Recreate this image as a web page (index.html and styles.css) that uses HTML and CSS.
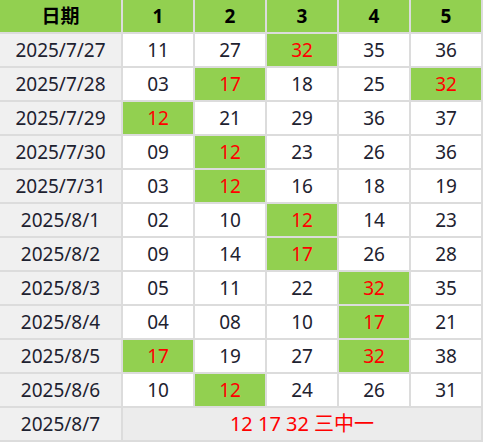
FILE: index.html
```html
<!DOCTYPE html>
<html lang="zh">
<head>
<meta charset="utf-8">
<link rel="stylesheet" href="styles.css">
</head>
<body>
<div class="grid">
  <div class="hd">日期</div><div class="hd">1</div><div class="hd">2</div><div class="hd">3</div><div class="hd">4</div><div class="hd">5</div>

  <div class="date">2025/7/27</div><div class="c">11</div><div class="c">27</div><div class="c hit">32</div><div class="c">35</div><div class="c">36</div>
  <div class="date">2025/7/28</div><div class="c">03</div><div class="c hit">17</div><div class="c">18</div><div class="c">25</div><div class="c hit">32</div>
  <div class="date">2025/7/29</div><div class="c hit">12</div><div class="c">21</div><div class="c">29</div><div class="c">36</div><div class="c">37</div>
  <div class="date">2025/7/30</div><div class="c">09</div><div class="c hit">12</div><div class="c">23</div><div class="c">26</div><div class="c">36</div>
  <div class="date">2025/7/31</div><div class="c">03</div><div class="c hit">12</div><div class="c">16</div><div class="c">18</div><div class="c">19</div>
  <div class="date">2025/8/1</div><div class="c">02</div><div class="c">10</div><div class="c hit">12</div><div class="c">14</div><div class="c">23</div>
  <div class="date">2025/8/2</div><div class="c">09</div><div class="c">14</div><div class="c hit">17</div><div class="c">26</div><div class="c">28</div>
  <div class="date">2025/8/3</div><div class="c">05</div><div class="c">11</div><div class="c">22</div><div class="c hit">32</div><div class="c">35</div>
  <div class="date">2025/8/4</div><div class="c">04</div><div class="c">08</div><div class="c">10</div><div class="c hit">17</div><div class="c">21</div>
  <div class="date">2025/8/5</div><div class="c hit">17</div><div class="c">19</div><div class="c">27</div><div class="c hit">32</div><div class="c">38</div>
  <div class="date">2025/8/6</div><div class="c">10</div><div class="c hit">12</div><div class="c">24</div><div class="c">26</div><div class="c">31</div>

  <div class="date">2025/8/7</div><div class="result">12 17 32 三中一</div>
</div>
</body>
</html>
```

FILE: styles.css
```css
html, body {
  margin: 0;
  padding: 0;
  background: #ffffff;
}

.grid {
  width: 483px;
  height: 442px;
  box-sizing: border-box;
  display: grid;
  grid-template-columns: 121px repeat(5, 70px);
  grid-auto-rows: 32px;
  gap: 2px;
  padding: 0 2px 2px 0;
  background: #dcdcdc;
  font-family: "Noto Sans", "Noto Sans CJK SC", sans-serif;
  font-size: 19px;
  color: #1e2230;
}

.grid > div {
  display: flex;
  align-items: center;
  justify-content: center;
  line-height: 1;
}

.hd {
  background: #92d050;
  color: #000;
  font-weight: bold;
}

.date {
  background: #f0f0f0;
}

.c {
  background: #ffffff;
}

.c.hit {
  background: #92d050;
  color: #ff0000;
}

.result {
  grid-column: span 5;
  background: #ececec;
  color: #ff0000;
  font-size: 20px;
}
```
